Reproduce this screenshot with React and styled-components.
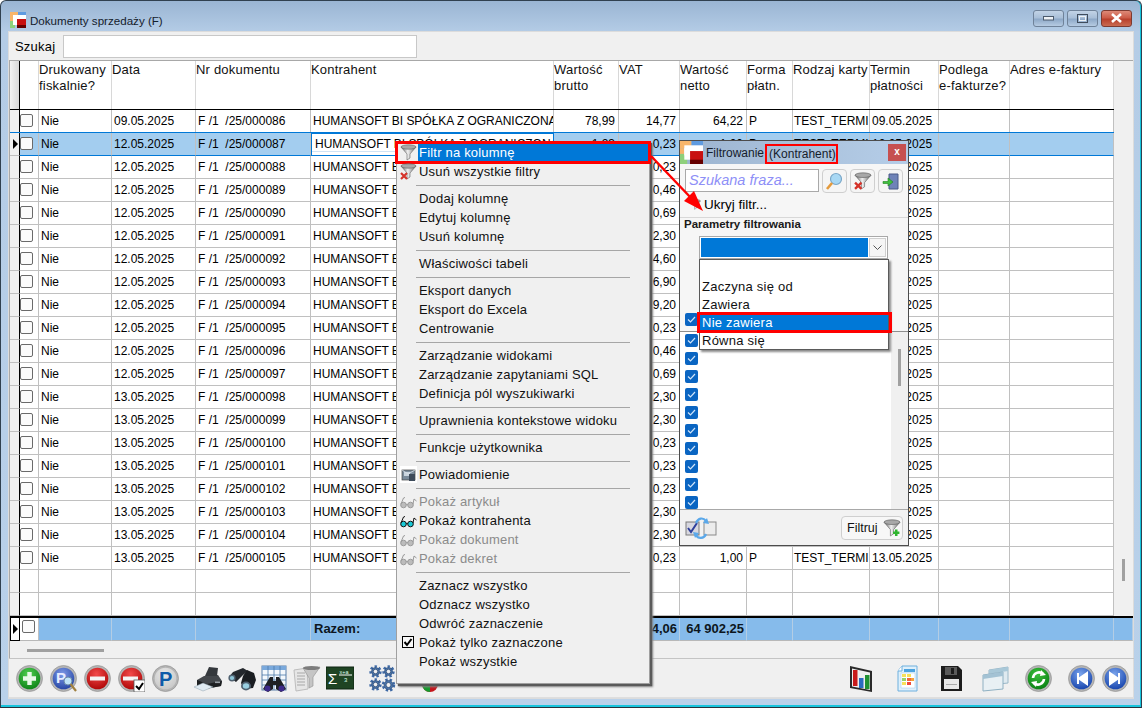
import React from "react";
import styled, { createGlobalStyle } from "styled-components";

const Global = createGlobalStyle`
  html, body { margin: 0; padding: 0; background: #fff; overflow: hidden; }
  #root { width: 1142px; height: 708px; }
  * { box-sizing: border-box; }
`;
const SANS = `"Liberation Sans", Arial, sans-serif`;
const COLS = "10px 19px 73px 84px 115px 243px 65px 61px 67px 46px 77px 69px 71px 104px";

const Win = styled.div`
  position: relative; width: 1142px; height: 708px; display: flex; flex-direction: column;
  background: linear-gradient(180deg, #9ab5d3 0, #b4cce6 31px, #b9d1ea 100%);
  border-radius: 6px 6px 0 0; font-family: ${SANS}; color: #000; overflow: hidden;
  border: 1px solid #30404f; border-bottom: 1px solid #26323c;
  box-shadow: inset 0 -2px 0 #16c4dc, inset -1px 0 0 #16c4dc;
`;
const TitleBar = styled.div`
  height: 30px; flex: none; display: flex; align-items: center; padding: 8px 8px 0 9px; gap: 4px;
`;
const TitleText = styled.div`
  font: 11.6px ${SANS}; color: #14202c; flex: 1;
`;
const WinBtn = styled.div`
  width: ${p => p.$w || 31}px; height: 17px; border: 1px solid ${p => p.$close ? "#7d3a30" : "#6f8299"};
  border-radius: 3px; display: flex; align-items: center; justify-content: center;
  background: ${p => p.$close
    ? "linear-gradient(180deg,#dd8a78 0,#cc5c48 45%,#b8402c 55%,#c96a50 100%)"
    : "linear-gradient(180deg,#c2d3e6 0,#a9bfd8 45%,#8ea9c8 55%,#b6cbe2 100%)"};
`;
const WinBtns = styled.div`
  display: flex; gap: 3px; margin-right: 1px; margin-top: -4px;
`;
const Content = styled.div`
  flex: 1; margin: 0 8px 8px 7px; width: 1126px; background: #f0f0f0;
  border: 1px solid #dcdcdc; display: flex; flex-direction: column;
`;
const SearchRow = styled.div`
  height: 28px; flex: none; display: flex; align-items: center; padding-left: 6px; gap: 8px;
`;
const SearchLabel = styled.span` font: 13px ${SANS}; letter-spacing: .2px; `;
const SearchInput = styled.div`
  width: 354px; height: 23px; background: #fff; border: 1px solid #c8c8c8; margin-top: 1px;
`;
const GridFrame = styled.div`
  border: 1px solid #a8a8a8; border-right: 0; border-bottom: 0; display: flex; flex-direction: column; flex: none;
`;
const GridMain = styled.div` display: flex; `;
const Rows = styled.div` width: 1104px; background: #fff; `;
const Row = styled.div`
  display: grid; grid-template-columns: ${COLS}; height: 23px; position: relative;
  ${p => p.$sel && "background:#a3cdef; box-shadow: 0 -1px 0 #0078d7, inset 0 -1px 0 #0078d7, inset -1px 0 0 #0078d7;"}
`;
const Cell = styled.div`
  font: 12px/22px ${SANS}; padding: 0 ${p => p.$right ? 3 : 0}px 0 ${p => p.$tight ? 1 : 2}px; white-space: nowrap; overflow: hidden;
  text-align: ${p => p.$right ? "right" : "left"};
  border-right: 1px solid #c0c0c0; border-bottom: 1px solid ${p => p.$sel ? "#0078d7" : "#c0c0c0"};
  ${p => p.$name && "letter-spacing: -.03px;"}
`;
const EditCell = styled(Cell)`
  background: #fff; border: 1px solid #0078d7; padding-left: 3px; line-height: 20px;
  box-shadow: inset 0 -3px 0 #fff, inset 0 -4px 0 #cfe3f5;
`;
const Indicator = styled.div`
  background: #f0f0f0; border-right: 1px solid #000; border-bottom: 1px solid #c0c0c0; display: flex;
  align-items: center; justify-content: flex-end; padding-right: 1px;
`;
const Arrowhead = styled.div`
  width: 0; height: 0; border-left: 5px solid #000; border-top: 5px solid transparent; border-bottom: 5px solid transparent;
`;
const CheckCell = styled.div`
  border-right: 1px solid #c0c0c0; border-bottom: 1px solid ${p => p.$sel ? "#0078d7" : "#c0c0c0"}; padding: 4px 0 0 0;
`;
const Tick = styled.div`
  width: 13px; height: 13px; border: 1px solid #6a6a6a; border-radius: 2px; background: #fbfbfb;
`;
const HeadRow = styled.div`
  display: grid; grid-template-columns: ${COLS}; height: 49px; border-bottom: 1px solid #000; background: #fff;
`;
const HeadInd = styled.div`
  background: linear-gradient(90deg,#f2f2f2,#d8d8d8); border-right: 1px solid #000;
`;
const HeadCell = styled.div`
  font: 13px/16px ${SANS}; letter-spacing: .2px; padding: 1px 0 0 0; border-right: 1px solid #d8d8d8;
  white-space: pre-line; overflow: hidden; color: #111;
`;
const VTrack = styled.div`
  width: 19px; background: #f0f0f0; position: relative; padding: 498px 8px 0 8px;
`;
const VThumb = styled.div` width: 3px; height: 22px; background: #a0a0a0; `;
const Summary = styled.div`
  display: grid; grid-template-columns: ${COLS} 19px; height: 25px; border-top: 2px solid #000; background: #86bbeb;
`;
const SumCell = styled.div`
  font: bold 13px/21px ${SANS}; padding: 0 ${p => p.$right ? 2 : 0}px 0 3px; text-align: ${p => p.$right ? "right" : "left"};
  border-right: 1px solid #b4cde4; border-bottom: 1px solid #b8b8b8; white-space: nowrap; overflow: hidden; color: #0d1620;
`;
const SumInd = styled.div`
  background: #fff; border: 1px solid #000; display: flex; align-items: center;
  justify-content: flex-end; padding-right: 1px; margin-top: -1px;
`;
const SumCheck = styled.div`
  background: #fff; padding: 2px 0 0 2px; border-right: 1px solid #c0c0c0; border-bottom: 1px solid #b8b8b8;
`;
const HScroll = styled.div`
  height: 17px; background: #f0f0f0; padding: 8px 0 0 17px;
`;
const HThumb = styled.div` width: 77px; height: 3px; background: #a0a0a0; `;
const Toolbar = styled.div`
  height: 40px; flex: none; border-top: 1px solid #c4c4c4; border-bottom: 1px solid #dedede; display: flex; align-items: center;
  padding: 0 3px 0 7px; margin-right: -1px;
`;
const ToolGroup = styled.div`
  display: flex; gap: ${p => p.$gap ?? 7}px; margin-left: ${p => p.$ml || 0}px;
`;
const ToolSvg = styled.svg` width: ${p => p.$w || 27}px; height: 27px; flex: none; display: block; `;

const Menu = styled.div`
  position: absolute; left: 395px; top: 140px; width: 254px; height: 543px; background: #f0f0f0;
  border: 1px solid #a0a0a0; padding: 1px 0 12px 0; box-shadow: 2px 2px 1px #5a5a5a, 3px 3px 2px #8a8a8a; z-index: 5;
`;
const MenuItem = styled.div`
  position: relative; height: 19px; display: flex; align-items: center;
  font: 13px/19px ${SANS}; letter-spacing: .2px; padding-left: 21px;
  color: ${p => p.$off ? "#8b8b8b" : "#111"}; white-space: nowrap;
  ${p => p.$active && `
    height: 20px; margin-bottom: -1px; padding-bottom: 1px; color: #fff;
    &::before { content: ""; position: absolute; inset: 0 1px 0 21px; background: #0078d7; }
    &::after { content: ""; position: absolute; left: -2px; right: -2px; top: -2px; bottom: -1px; border: 3px solid #f00; }
  `}
`;
const MenuLabel = styled.span` position: relative; z-index: 1; padding-left: 1px; `;
const MenuIcon = styled.span`
  position: absolute; left: 3px; top: 1px; width: 17px; height: 17px; display: flex; z-index: 2;
  ${p => p.$bg && "background:#fff;"}
`;
const MenuSep = styled.div`
  height: 8px; display: flex; align-items: flex-start; padding: 4px 19px 0 19px;
  &::after { content: ""; flex: 1; height: 1px; background: #a6a6a6; }
`;
const MenuCheck = styled.span`
  position: absolute; left: 5px; top: 3px; width: 12px; height: 12px; border: 1px solid #000; background: #f8f8f8;
  display: flex;
`;

const Dialog = styled.div`
  position: absolute; left: 678px; top: 139px; width: 230px; height: 406px; background: #fff; border: 1px solid #4c4c4c;
  display: flex; flex-direction: column; z-index: 6;
`;
const DlgTitle = styled.div`
  height: 23px; flex: none; display: flex; align-items: center; font: 12px ${SANS}; color: #15202c;
  background: linear-gradient(90deg,#9cb4d0 0,#a8c0da 45%,#b5cde8 100%); padding: 0 2px 0 0;
`;
const DlgName = styled.span` margin-left: 3px; `;
const DlgTitleHit = styled.span`
  margin: 2px 0 0 1px; padding: 0 0 0 2px; height: 20px; line-height: 16px; border: 2px solid #f00; white-space: nowrap;
`;
const DlgClose = styled.div`
  margin-left: auto; width: 18px; height: 17px; background: #c65050; color: #fff; font: bold 10px/15px ${SANS}; text-align: center;
`;
const DlgSearchRow = styled.div`
  display: flex; gap: 3px; padding: 5px 5px 0 5px; height: 29px; flex: none; background: #f6f6f6;
`;
const DlgInput = styled.div`
  width: 134px; height: 23px; border: 1px solid #a9a9a9; background: #fff; color: #8e8ff7;
  font: italic 14.5px/21px ${SANS}; padding-left: 3px; white-space: nowrap; overflow: hidden;
`;
const DlgBtn = styled.div`
  width: 25px; height: 24px; border: 1px solid #cfcfcf; border-radius: 4px; background: #f5f5f5; display: flex;
  align-items: center; justify-content: center;
`;
const HideRow = styled.div`
  height: 25px; flex: none; display: flex; align-items: center; gap: 3px; padding: 0 0 1px 10px; font: 13.5px ${SANS};
  border-bottom: 1px solid #d8d8d8; background: #f6f6f6;
`;
const ParamTitle = styled.div`
  font: bold 11.5px/12px ${SANS}; padding: 0 0 0 4px; color: #1a1a1a; background: #f6f6f6; height: 18px; flex: none;
`;
const ComboArea = styled.div`
  height: 77px; flex: none; background: #f6f6f6; padding: 0 0 0 19px; position: relative;
`;
const Combo = styled.div`
  width: 189px; height: 23px; border: 1px solid #a9a9a9; background: #fff; display: flex; padding: 1px; gap: 1px;
`;
const ComboFill = styled.div` flex: 1; background: #0078d7; `;
const ComboBtn = styled.div`
  width: 17px; border: 1px solid #d0d0d0; background: #f5f5f5; display: flex; align-items: center; justify-content: center;
`;
const Drop = styled.div`
  position: absolute; left: 19px; top: 23px; width: 190px; height: 91px; background: #fff; border: 1px solid #5a5a5a;
  box-shadow: 2px 2px 2px #8a8a8a; display: flex; flex-direction: column; z-index: 3;
`;
const DropItem = styled.div`
  position: relative; height: 18px; font: 13px/20px ${SANS}; letter-spacing: .25px; padding-left: 2px; white-space: nowrap;
  color: #111;
  ${p => p.$blank && "height: 17px;"}
  ${p => p.$active && `
    background: #0078d7; color: #fff;
    &::after { content: ""; position: absolute; left: -3px; right: -4px; top: -1px; bottom: -2px; border: 3px solid #f00; }
  `}
`;
const AllRow = styled.div`
  height: 19px; flex: none; background: #f6f6f6; border-bottom: 1px solid #8e8e8e; padding-left: 5px; width: 100%;
`;
const ListArea = styled.div` flex: 1; display: flex; min-height: 0; overflow: hidden; `;
const CheckList = styled.div`
  flex: 1; padding: 2px 0 0 5px; display: flex; flex-direction: column; gap: 5px; overflow: hidden;
`;
const BlueTick = styled.div`
  width: 13px; height: 13px; flex: none; background: #0a65c2; border-radius: 2px; display: flex; align-items: center; justify-content: center;
`;
const DlgScroll = styled.div`
  width: 17px; background: #f0f0f0; padding: 17px 0 0 7px; flex: none;
`;
const DlgThumb = styled.div` width: 3px; height: 37px; background: #a0a0a0; `;
const DlgFooter = styled.div`
  height: 36px; flex: none; background: #f2f2f2; border-top: 1px solid #a8a8a8; display: flex; align-items: center;
  justify-content: space-between; padding: 0 5px 0 5px;
`;
const FilterBtn = styled.div`
  width: 62px; height: 24px; border: 1px solid #cfcfcf; border-radius: 4px; background: #f7f7f7; display: flex;
  align-items: center; gap: 5px; padding-left: 5px; font: 12.5px ${SANS}; color: #111;
`;
const Overlay = styled.svg`
  position: absolute; left: -1px; top: -1px; width: 1142px; height: 708px; pointer-events: none; z-index: 7;
`;

/* ---------- drawings ---------- */
const AppLogo = ({ s = 16 }) => (
  <svg width={s} height={s} viewBox="0 0 16 16" style={{ flex: "none" }}>
    <rect x="0" y="0" width="8" height="5" fill="#f8b56a" />
    <rect x="0" y="5" width="3" height="4" fill="#f8b56a" />
    <rect x="8" y="0" width="8" height="5" fill="#5f9be0" />
    <rect x="0" y="9" width="5" height="7" fill="#8ed07c" />
    <rect x="3" y="3" width="13" height="7" fill="#fff" />
    <rect x="3" y="5" width="6" height="8" fill="#fff" />
    <rect x="7" y="7" width="9" height="9" fill="#c81010" />
    <rect x="7" y="13" width="9" height="3" fill="#600" />
  </svg>
);
const Funnel = ({ size = 17, badge }) => (
  <svg width={size} height={size} viewBox="0 0 17 17" style={{ flex: "none" }}>
    <defs>
      <linearGradient id={`fg${badge || "n"}${size}`} x1="0" x2="1" y1="0" y2="0">
        <stop offset="0" stopColor="#5f5f5f" /><stop offset=".45" stopColor="#f0f0f0" /><stop offset="1" stopColor="#6a6a6a" />
      </linearGradient>
    </defs>
    <path d="M1 3 L7 10 L7 16 L10 14 L10 10 L16 3 Z" fill={`url(#fg${badge || "n"}${size})`} stroke="#666" strokeWidth=".6" />
    <ellipse cx="8.5" cy="3" rx="7.5" ry="2.2" fill="#a8a8a8" stroke="#5e5e5e" strokeWidth=".6" />
    {badge === "x" && <path d="M1 10 L7 16 M7 10 L1 16" stroke="#d5332a" strokeWidth="2.2" />}
    {badge === "plus" && <path d="M12.5 10 V16 M9.5 13 H15.5" stroke="#2fb52f" strokeWidth="2.4" />}
  </svg>
);
const Glasses = ({ off }) => (
  <svg width="17" height="17" viewBox="0 0 17 17">
    <g stroke={off ? "#9a9a9a" : "#111"} strokeWidth="1" fill={off ? "#bcbcbc" : "#19c9d6"}>
      <circle cx="3.5" cy="12" r="2.8" />
      <circle cx="10.5" cy="12" r="2.8" />
      <path d="M6.3 11.5 H7.7 M1 11 L3.5 5 L5 4.5 M13 11 L14 6 L16.5 8" fill="none" />
    </g>
  </svg>
);
const Notify = () => (
  <svg width="17" height="17" viewBox="0 0 17 17">
    <rect x="2" y="4" width="13" height="10" fill="#7b8c9c" stroke="#444" strokeWidth=".7" />
    <rect x="4" y="6" width="6" height="4" fill="#c9d4de" />
    <rect x="9" y="8" width="6" height="7" fill="#3d4a5a" />
    <path d="M2 4 L8 8 L15 4" stroke="#d8e0e8" fill="none" strokeWidth=".8" />
  </svg>
);
const Orb = ({ id, a, b, children }) => (
  <ToolSvg viewBox="0 0 27 27">
    <defs>
      <radialGradient id={id} cx=".45" cy=".3" r=".8">
        <stop offset="0" stopColor={a} /><stop offset="1" stopColor={b} />
      </radialGradient>
    </defs>
    <circle cx="13.5" cy="13.5" r="13" fill="#b4b4b4" stroke="#8c8c8c" strokeWidth=".6" />
    <circle cx="13.5" cy="13.5" r="10.8" fill={`url(#${id})`} />
    {children}
  </ToolSvg>
);
const PrintIcon = () => (
  <ToolSvg $w={29} viewBox="0 0 29 27">
    <path d="M3 15 L10 11 L24 10 L28 16 L27 21 L11 24 L3 21 Z" fill="#43474b" />
    <path d="M3 15 L13 19 L28 16 L27 21 L11 24 L3 21Z" fill="#1d1f21" />
    <path d="M11 11 L15 2 L24 3 L23 11 Z" fill="#34383c" />
    <path d="M0 22 L9 18 L19 22 L9 26 Z" fill="#dfeaf2" stroke="#8ea1ad" strokeWidth=".5" />
    <rect x="21" y="16.5" width="5" height="1.6" fill="#9aa0a6" />
  </ToolSvg>
);
const BinocIcon = () => (
  <ToolSvg $w={28} viewBox="0 0 28 27">
    <path d="M1 12 L5 7 L15 3 L20 6 L15 10 L8 17 Z" fill="#24282d" />
    <path d="M15 11 L19 5 L26 8 L28 15 L25 23 L16 24 L13 18 Z" fill="#1a1d21" />
    <ellipse cx="4" cy="13" rx="3.6" ry="3.4" fill="#506170" />
    <ellipse cx="4" cy="13" rx="2.2" ry="2" fill="#8ec5d8" />
    <ellipse cx="18" cy="21" rx="5" ry="4.4" fill="#506170" />
    <ellipse cx="18" cy="21" rx="3.2" ry="2.8" fill="#9ad0e2" />
  </ToolSvg>
);
const GridBinocIcon = () => (
  <ToolSvg viewBox="0 0 27 27">
    <rect x="1" y="1" width="24" height="24" fill="#f4f8fc" stroke="#5a7fa8" />
    <rect x="1" y="1" width="24" height="4" fill="#7aa9dc" />
    <path d="M1 10H25M1 15H25M1 20H25M7 1V25M13 1V25M19 1V25" stroke="#4c78aa" strokeWidth=".8" />
    <path d="M9 12 H12 V16 H15 V12 H18 L21 17 L25 24 L20 27 L15 24 V20 H12 V24 L7 27 L2 24 L6 17 Z" fill="#1e2024" />
    <circle cx="6.5" cy="23.5" r="3" fill="#3d2a8a" />
    <circle cx="20.5" cy="23.5" r="3" fill="#3d2a8a" />
  </ToolSvg>
);
const DocFunnelIcon = () => (
  <ToolSvg $w={28} viewBox="0 0 28 27">
    <path d="M1 5 L14 3 L15 24 L3 26 Z" fill="#e6e6e6" stroke="#bdbdbd" />
    <path d="M4 8H12M4 11H12M4 14H12M4 17H12M4 20H12" stroke="#a8a8a8" strokeWidth="1" />
    <path d="M10 3 L27 2 L20 12 L20 21 L16 23 L16 13 Z" fill="#c5c5c5" stroke="#8e8e8e" strokeWidth=".6" />
    <ellipse cx="18.5" cy="3" rx="8.5" ry="2" fill="#7c7c7c" />
  </ToolSvg>
);
const BoardIcon = () => (
  <ToolSvg $w={28} viewBox="0 0 28 27">
    <rect x="0" y="2" width="28" height="22" fill="#1f4423" stroke="#0f2412" />
    <text x="2" y="19" fill="#fff" fontSize="15" fontFamily="Liberation Sans">Σ</text>
    <path d="M13 10 H26" stroke="#fff" />
    <text x="13.5" y="8.5" fill="#dfe" fontSize="5.5" fontFamily="Liberation Sans">x+a</text>
    <text x="18" y="17" fill="#dfe" fontSize="6" fontFamily="Liberation Sans">3</text>
  </ToolSvg>
);
const Gear = ({ x, y, r }) => (
  <g transform={`translate(${x} ${y})`}>
    <circle r={r} fill="none" stroke="#3f6aa6" strokeWidth="2.4" strokeDasharray="2.4 2" />
    <circle r={r - 1} fill="#4d77ad" stroke="#22406a" strokeWidth=".6" />
    <circle r={r * .45} fill="#f0f0f0" stroke="#22406a" strokeWidth=".7" />
  </g>
);
const GearsIcon = () => (
  <ToolSvg viewBox="0 0 27 27">
    <Gear x={6.5} y={6.5} r={5} /><Gear x={19.5} y={6.5} r={5} />
    <Gear x={6.5} y={19.5} r={5} /><Gear x={19.5} y={20} r={5.5} />
  </ToolSvg>
);
const PieIcon = () => (
  <ToolSvg $w={16} viewBox="0 0 16 27">
    <circle cx="8" cy="19" r="8" fill="#c4161c" />
    <path d="M8 19 V27 A8 8 0 0 1 0 19 Z" fill="#149a2c" />
  </ToolSvg>
);
const ChartIcon = () => (
  <ToolSvg viewBox="0 0 27 27">
    <path d="M1 1 L23 6 L23 27 L1 23 Z" fill="#2a2a2a" />
    <path d="M3 3.5 L21 7.5 L21 25 L3 21.5 Z" fill="#efefef" />
    <path d="M4 5 H8.5 V21 H4Z" fill="#c91a1a" />
    <path d="M10 13 H14.5 V23 H10Z" fill="#2a6bc0" />
    <path d="M16 10 H20.5 V24 H16Z" fill="#1f9131" />
  </ToolSvg>
);
const ColorDocIcon = () => (
  <ToolSvg $w={22} viewBox="0 0 22 27">
    <path d="M6 1 H21 V26 H2 V6 Z" fill="#dff0fb" stroke="#6fb0de" />
    <path d="M6 1 V6 H2" fill="#fff" stroke="#6fb0de" />
    <path d="M5 8H19V23H5Z" fill="#fff" stroke="#9ccbe8" strokeWidth=".5" />
    <rect x="8" y="4" width="11" height="3" fill="#4da4e0" />
    <rect x="6" y="9" width="4" height="3" fill="#f7e15a" /><rect x="11" y="9" width="4" height="3" fill="#f7e15a" />
    <rect x="11" y="13" width="4" height="3" fill="#ef6a3a" /><rect x="15" y="13" width="3" height="3" fill="#f7a23a" />
    <rect x="6" y="13" width="4" height="3" fill="#97d36a" /><rect x="6" y="17" width="4" height="3" fill="#f7e15a" />
    <rect x="11" y="17" width="4" height="3" fill="#ef4a3a" />
  </ToolSvg>
);
const FloppyIcon = () => (
  <ToolSvg $w={23} viewBox="0 0 23 27">
    <path d="M1 1 H18 L22 5 V26 H1 Z" fill="#1c1c1c" />
    <rect x="5" y="2" width="12" height="8" fill="#5a5a5a" />
    <rect x="11" y="3" width="3" height="6" fill="#1c1c1c" />
    <rect x="4" y="14" width="15" height="10" fill="#e8e8e8" />
    <rect x="6" y="19" width="11" height="1" fill="#aaa" />
  </ToolSvg>
);
const WindowsIcon = () => (
  <ToolSvg viewBox="0 0 27 27">
    <path d="M7 5 L26 2 V18 L7 20 Z" fill="#dfeaf0" stroke="#9ab8c8" />
    <path d="M7 5 L26 2 V6 L7 9 Z" fill="#a9c8d8" />
    <path d="M1 10 L21 7 V24 L1 26 Z" fill="#e8f0f4" stroke="#8fb0c2" />
    <path d="M1 10 L21 7 V11 L1 14 Z" fill="#a3c2d4" />
  </ToolSvg>
);
const Chevron = () => (
  <svg width="9" height="5" viewBox="0 0 9 5"><path d="M.5 .5 L4.5 4.5 L8.5 .5" fill="none" stroke="#555" /></svg>
);
const WhiteTick = () => (
  <svg width="9" height="7" viewBox="0 0 9 7"><path d="M1 3.5 L3.5 6 L8 1" fill="none" stroke="#cfe4fa" strokeWidth="1.2" /></svg>
);
const Magnifier = () => (
  <svg width="17" height="19" viewBox="0 0 17 19">
    <circle cx="10" cy="7" r="5.5" fill="#a8d8f4" stroke="#7aa7c8" strokeWidth="1.2" />
    <path d="M6 11 L1 17" stroke="#e49a3c" strokeWidth="2.6" />
  </svg>
);
const ExitIcon = () => (
  <svg width="17" height="17" viewBox="0 0 17 17">
    <path d="M7 1 H16 V16 H7Z" fill="#6f83b8" stroke="#4a5a88" />
    <path d="M1 8.5 H6 V5 L11 9 L6 13 V10.5 H1Z" fill="#3fbf3f" stroke="#1f7f1f" strokeWidth=".6" />
  </svg>
);
const ToggleIcon = () => (
  <svg width="32" height="22" viewBox="0 0 32 22">
    <rect x="1" y="5" width="13" height="13" fill="#d8d8e0" stroke="#7a7a7a" />
    <path d="M3 11 L6 15 L12 6" stroke="#2f3f9a" strokeWidth="2" fill="none" />
    <rect x="19" y="5" width="12" height="13" fill="#ececec" stroke="#8a8a8a" />
    <path d="M11 6 C13 1 18 0 21 4 M21 17 C19 22 13 22 11 18" stroke="#5aa8ea" strokeWidth="2.2" fill="none" />
    <path d="M18 6 L24 7 L22 1Z M14 16 L8 15 L10 21Z" fill="#5aa8ea" />
  </svg>
);

/* ---------- data ---------- */
const vats = ["0,23","0,23","0,46","0,69","2,30","4,60","6,90","9,20","0,23","0,46","0,69","2,30","2,30","0,23","0,23","0,23","2,30","2,30","0,23"];
const amount = { "0,23": ["1,23","1,00"], "0,46": ["2,46","2,00"], "0,69": ["3,69","3,00"], "2,30": ["12,30","10,00"], "4,60": ["24,60","20,00"], "6,90": ["36,90","30,00"], "9,20": ["49,20","40,00"] };
const NAME = "HUMANSOFT BI SPÓŁKA Z OGRANICZONĄ";
const dated = i => {
  if (i === 0) return "09.05.2025";
  return i <= 11 ? "12.05.2025" : "13.05.2025";
};
const rows = [
  { nr: 86, br: "78,99", vat: "14,77", ne: "64,22" },
  ...vats.map((v, k) => ({ nr: 87 + k, br: amount[v][0], vat: v, ne: amount[v][1] })),
];
rows[19].ne = "1,00";
const heads = ["Drukowany\nfiskalnie?", "Data", "Nr dokumentu", "Kontrahent", "Wartość\nbrutto", "VAT", "Wartość\nnetto", "Forma\npłatn.", "Rodzaj karty", "Termin\npłatności", "Podlega\ne-fakturze?", "Adres e-faktury"];

const menu = [
  [{ t: "Filtr na kolumnę", active: true, icon: <Funnel /> }, { t: "Usuń wszystkie filtry", icon: <Funnel badge="x" /> }],
  [{ t: "Dodaj kolumnę" }, { t: "Edytuj kolumnę" }, { t: "Usuń kolumnę" }],
  [{ t: "Właściwości tabeli" }],
  [{ t: "Eksport danych" }, { t: "Eksport do Excela" }, { t: "Centrowanie" }],
  [{ t: "Zarządzanie widokami" }, { t: "Zarządzanie zapytaniami SQL" }, { t: "Definicja pól wyszukiwarki" }],
  [{ t: "Uprawnienia kontekstowe widoku" }],
  [{ t: "Funkcje użytkownika" }],
  [{ t: "Powiadomienie", icon: <Notify />, bg: true }],
  [{ t: "Pokaż artykuł", off: true, icon: <Glasses off /> }, { t: "Pokaż kontrahenta", icon: <Glasses /> }, { t: "Pokaż dokument", off: true, icon: <Glasses off /> }, { t: "Pokaż dekret", off: true, icon: <Glasses off /> }],
  [{ t: "Zaznacz wszystko" }, { t: "Odznacz wszystko" }, { t: "Odwróć zaznaczenie" }, { t: "Pokaż tylko zaznaczone", check: true }, { t: "Pokaż wszystkie" }],
];

const DataRow = ({ r, i }) => {
  const sel = i === 1;
  return (
    <Row $sel={sel}>
      <Indicator>{sel && <Arrowhead />}</Indicator>
      <CheckCell $sel={sel}><Tick /></CheckCell>
      <Cell $sel={sel}>Nie</Cell>
      <Cell $sel={sel}>{dated(i)}</Cell>
      <Cell $sel={sel}>F /1&nbsp; /25/{String(r.nr).padStart(6, "0")}</Cell>
      {sel ? <EditCell $name>{NAME}</EditCell> : <Cell $name>{NAME}</Cell>}
      <Cell $sel={sel} $right>{r.br}</Cell>
      <Cell $sel={sel} $right>{r.vat}</Cell>
      <Cell $sel={sel} $right>{r.ne}</Cell>
      <Cell $sel={sel}>P</Cell>
      <Cell $sel={sel} $tight>TEST_TERMINAL</Cell>
      <Cell $sel={sel}>{dated(i)}</Cell>
      <Cell $sel={sel} />
      <Cell $sel={sel} />
    </Row>
  );
};
const EmptyRow = () => (
  <Row>
    <Indicator />
    {Array.from({ length: 13 }).map((_, i) => <Cell key={i} />)}
  </Row>
);

export default function App() {
  return (
    <Win>
      <Global />
      <TitleBar>
        <AppLogo />
        <TitleText>Dokumenty sprzedaży (F)</TitleText>
        <WinBtns>
          <WinBtn>
            <svg width="11" height="5" viewBox="0 0 11 5"><rect x=".5" y=".5" width="10" height="3.5" fill="#eef2f6" stroke="#4c5a6c" /></svg>
          </WinBtn>
          <WinBtn>
            <svg width="11" height="9" viewBox="0 0 11 9"><rect x=".5" y=".5" width="10" height="8" fill="none" stroke="#3f4c5c" /><rect x="2.5" y="2.5" width="6" height="4" fill="none" stroke="#eef2f6" /></svg>
          </WinBtn>
          <WinBtn $close>
            <svg width="13" height="10" viewBox="0 0 13 10"><path d="M2 1 L11 9 M11 1 L2 9" stroke="#fff" strokeWidth="2.6" /></svg>
          </WinBtn>
        </WinBtns>
      </TitleBar>
      <Content>
        <SearchRow>
          <SearchLabel>Szukaj</SearchLabel>
          <SearchInput />
        </SearchRow>
        <GridFrame>
          <GridMain>
            <Rows>
              <HeadRow>
                <HeadInd />
                <HeadCell />
                {heads.map(h => <HeadCell key={h}>{h}</HeadCell>)}
              </HeadRow>
              {rows.map((r, i) => <DataRow key={r.nr} r={r} i={i} />)}
              <EmptyRow />
              <EmptyRow />
            </Rows>
            <VTrack><VThumb /></VTrack>
          </GridMain>
          <Summary>
            <SumInd><Arrowhead /></SumInd>
            <SumCheck><Tick /></SumCheck>
            <SumCell /><SumCell /><SumCell />
            <SumCell>Razem:</SumCell>
            <SumCell $right>5 014,23</SumCell>
            <SumCell $right>14,06</SumCell>
            <SumCell $right>64 902,25</SumCell>
            <SumCell /><SumCell /><SumCell /><SumCell /><SumCell /><SumCell />
          </Summary>
          <HScroll><HThumb /></HScroll>
        </GridFrame>
        <Toolbar>
          <ToolGroup>
            <Orb id="o1" a="#52d052" b="#047a10">
              <path d="M13.5 7 V20 M7 13.5 H20" stroke="#e8f8e8" strokeWidth="4.4" />
            </Orb>
            <Orb id="o2" a="#7e9ae8" b="#1c3c9c">
              <text x="6" y="18" fontFamily="Liberation Sans" fontWeight="bold" fontSize="15" fill="#e6ecff">P</text>
              <circle cx="18" cy="16" r="4" fill="#bfe4f8" stroke="#6a8aa8" />
              <path d="M20.5 19 L26 26" stroke="#a08040" strokeWidth="2.2" />
            </Orb>
            <Orb id="o3" a="#f24a4a" b="#a80000"><rect x="6" y="11.5" width="15" height="4" fill="#f4f4f4" /></Orb>
            <Orb id="o4" a="#f24a4a" b="#a80000">
              <rect x="5" y="11.5" width="15" height="4" fill="#f4f4f4" />
              <rect x="16" y="15" width="11" height="12" fill="#fff" stroke="#555" strokeWidth=".8" />
              <path d="M18 21 L21 24 L25 18" stroke="#000" strokeWidth="2" fill="none" />
            </Orb>
            <Orb id="o5" a="#e8e8e8" b="#c4c4c4">
              <text x="7" y="21" fontFamily="Liberation Sans" fontWeight="bold" fontSize="20" fill="#0d5aa8">P</text>
            </Orb>
          </ToolGroup>
          <ToolGroup $ml={15} $gap={5}>
            <PrintIcon /><BinocIcon /><GridBinocIcon /><DocFunnelIcon /><BoardIcon />
          </ToolGroup>
          <ToolGroup $ml={15}><GearsIcon /></ToolGroup>
          <ToolGroup $ml={26}><PieIcon /></ToolGroup>
          <ToolGroup $ml={411}><ChartIcon /></ToolGroup>
          <ToolGroup $ml={20}><ColorDocIcon /></ToolGroup>
          <ToolGroup $ml={22}><FloppyIcon /></ToolGroup>
          <ToolGroup $ml={19}><WindowsIcon /></ToolGroup>
          <ToolGroup $ml={16}>
            <Orb id="o6" a="#3cc03c" b="#047a10">
              <path d="M8 13 A6 6 0 0 1 18 9 M19 14 A6 6 0 0 1 9 18" stroke="#fff" strokeWidth="2.6" fill="none" />
              <path d="M16 5 L21 10 L15 11Z M11 22 L6 17 L12 16Z" fill="#fff" />
            </Orb>
          </ToolGroup>
          <ToolGroup $ml={16} $gap={7}>
            <Orb id="o7" a="#7aa4ec" b="#0c3aa6">
              <path d="M10 8 V19 M19 8 L11 13.5 L19 19 Z" stroke="#fff" strokeWidth="2" fill="#fff" />
            </Orb>
            <Orb id="o8" a="#7aa4ec" b="#0c3aa6">
              <path d="M17 8 V19 M8 8 L16 13.5 L8 19 Z" stroke="#fff" strokeWidth="2" fill="#fff" />
            </Orb>
          </ToolGroup>
        </Toolbar>
      </Content>

      <Menu>
        {menu.map((group, gi) => (
          <React.Fragment key={gi}>
            {gi > 0 && <MenuSep />}
            {group.map(it => (
              <MenuItem key={it.t} $active={it.active} $off={it.off}>
                {it.icon && <MenuIcon $bg={it.bg}>{it.icon}</MenuIcon>}
                {it.check && (
                  <MenuCheck>
                    <svg width="10" height="10" viewBox="0 0 10 10"><path d="M1.5 5 L4 8 L8.5 2" stroke="#000" strokeWidth="2" fill="none" /></svg>
                  </MenuCheck>
                )}
                <MenuLabel>{it.t}</MenuLabel>
              </MenuItem>
            ))}
          </React.Fragment>
        ))}
      </Menu>

      <Dialog>
        <DlgTitle>
          <AppLogo s={23} />
          <DlgName>Filtrowanie</DlgName>
          <DlgTitleHit>(Kontrahent)</DlgTitleHit>
          <DlgClose>x</DlgClose>
        </DlgTitle>
        <DlgSearchRow>
          <DlgInput>Szukana fraza...</DlgInput>
          <DlgBtn><Magnifier /></DlgBtn>
          <DlgBtn><Funnel badge="x" size={18} /></DlgBtn>
          <DlgBtn><ExitIcon /></DlgBtn>
        </DlgSearchRow>
        <HideRow><Funnel size={11} />Ukryj filtr...</HideRow>
        <ParamTitle>Parametry filtrowania</ParamTitle>
        <ComboArea>
          <Combo><ComboFill /><ComboBtn><Chevron /></ComboBtn></Combo>
          <Drop>
            <DropItem $blank />
            <DropItem>Zaczyna się od</DropItem>
            <DropItem>Zawiera</DropItem>
            <DropItem $active>Nie zawiera</DropItem>
            <DropItem>Równa się</DropItem>
          </Drop>
        </ComboArea>
        <AllRow><BlueTick><WhiteTick /></BlueTick></AllRow>
        <ListArea>
          <CheckList>
            {Array.from({ length: 10 }).map((_, i) => <BlueTick key={i}><WhiteTick /></BlueTick>)}
          </CheckList>
          <DlgScroll><DlgThumb /></DlgScroll>
        </ListArea>
        <DlgFooter>
          <ToggleIcon />
          <FilterBtn>Filtruj<Funnel badge="plus" size={18} /></FilterBtn>
        </DlgFooter>
      </Dialog>

      <Overlay viewBox="0 0 1142 708">
        <path d="M651 156 L692 199" stroke="#f00" strokeWidth="2.4" />
        <path d="M703 211 L684 201 L694 191 Z" fill="#f00" />
      </Overlay>
    </Win>
  );
}
